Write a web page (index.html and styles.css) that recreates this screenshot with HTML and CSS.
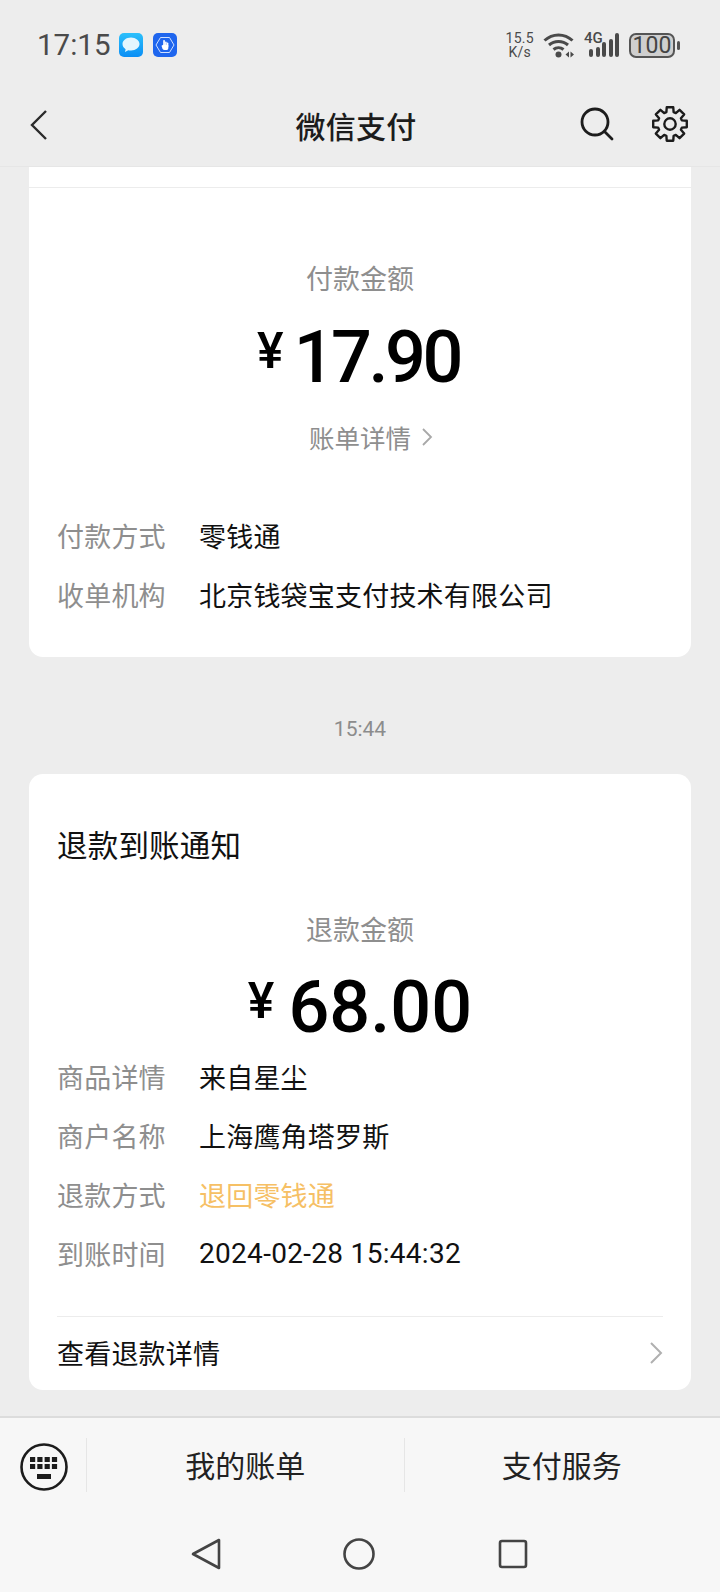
FILE: index.html
```html
<!DOCTYPE html>
<html lang="zh">
  <head>
    <meta charset="utf-8">
    <link rel="stylesheet" href="styles.css">
  </head>
  <body>
    <div class="status-bar">
      <div class="status-left">
        <span class="clock">17:15</span>
        <svg class="app-icon" viewBox="0 0 24 24">
          <defs>
            <linearGradient id="msg-bg" x1="0" y1="0" x2="0" y2="1">
              <stop offset="0" stop-color="#2cc0fb"/>
              <stop offset="1" stop-color="#0a8ef5"/>
            </linearGradient>
          </defs>
          <rect width="24" height="24" rx="5" fill="url(#msg-bg)"/>
          <path d="M12 4.500c-4.800 0-8.500 2.900-8.500 6.600 0 2.100 1.200 3.900 3.100 5.100l-.6 2.800 3.300-1.800c.9.200 1.800.300 2.700.300 4.800 0 8.500-2.900 8.500-6.400S16.800 4.500 12 4.500z" fill="#e4f6fe"/>
        </svg>
        <svg class="app-icon" viewBox="0 0 24 24">
          <rect width="24" height="24" rx="5" fill="#1f66ee"/>
          <path d="M7.500 4.500h9L21 12l-4.500 7.500h-9L3 12z" fill="none" stroke="#cfe0ff" stroke-width="1"/>
          <g fill="#fff">
            <rect x="10.200" y="7" width="1.700" height="7" rx=".8"/>
            <rect x="12.100" y="8.500" width="1.500" height="5" rx=".7"/>
            <rect x="13.800" y="9.500" width="1.500" height="5" rx=".7"/>
            <path d="M8.500 12.800l1.700-1h5.100v3.400c0 1.100-.8 1.900-1.900 1.900h-1.900c-.8 0-1.500-.4-1.900-1.100z"/>
          </g>
        </svg>
      </div>
      <div class="status-right">
        <div class="speed"><span>15.5</span><span>K/s</span></div>
        <svg class="wifi" viewBox="0 0 32 26" fill="none" stroke="#4a4a4a" stroke-width="3">
          <path d="M1.500 8.500c8-7.500 20-7.500 28 0"/>
          <path d="M6 13c5.500-4.800 13.500-4.800 19 0"/>
          <path d="M10.500 17.500c3-2.500 7-2.500 10 0"/>
          <circle cx="15.500" cy="22.500" r="3" fill="#4a4a4a" stroke="none"/>
          <path d="M26 19.500l-3.500 3 3.500 3zM27.500 19.500l3.500 3-3.500 3z" fill="#4a4a4a" stroke="none"/>
        </svg>
        <div class="signal">
          <span class="net">4G</span>
          <i class="bar-1"></i><i class="bar-2"></i><i class="bar-3"></i><i class="bar-4"></i><i class="bar-5"></i>
        </div>
        <div class="battery"><span class="battery-level">100</span><i class="battery-tip"></i></div>
      </div>
    </div>

    <div class="nav-bar">
      <svg class="back" viewBox="0 0 20 32" fill="none" stroke="#2b2b2b" stroke-width="2.400">
        <path d="M17 2L3 16l14 14"/>
      </svg>
      <div class="nav-title">微信支付</div>
      <svg class="nav-icon search" viewBox="0 0 36 36" fill="none" stroke="#1c1c1c" stroke-width="2.800" stroke-linecap="round">
        <circle cx="15" cy="15" r="13"/>
        <path d="M24.500 24.500l7.500 7.500"/>
      </svg>
      <svg class="nav-icon gear" viewBox="0 0 40 40" fill="none" stroke="#1c1c1c" stroke-width="2.500" stroke-linejoin="round">
        <path d="M16.200 7.570L16.570 2.330H23.430L23.800 7.570L26.100 8.520L30.070 5.080L34.920 9.930L31.480 13.900L32.430 16.200L37.670 16.570V23.430L32.430 23.800L31.480 26.100L34.920 30.070L30.070 34.920L26.100 31.480L23.800 32.430L23.430 37.670H16.570L16.200 32.430L13.900 31.480L9.930 34.920L5.080 30.070L8.520 26.100L7.570 23.800L2.330 23.430V16.570L7.570 16.200L8.520 13.900L5.080 9.930L9.930 5.080L13.900 8.520z"/>
        <circle cx="20" cy="20" r="6"/>
      </svg>
    </div>

    <div class="messages">
      <div class="card card-pay">
        <div class="card-rule"></div>
        <div class="amount-label">付款金额</div>
        <div class="amount amount-pay"><span class="yen">¥</span>17.90</div>
        <div class="bill-link">账单详情
          <svg class="chevron-small" viewBox="0 0 12 20" fill="none" stroke="#a8a8a8" stroke-width="1.800"><path d="M2 2l8 8-8 8"/></svg>
        </div>
        <div class="rows rows-pay">
          <div class="row"><span class="row-key">付款方式</span><span class="row-val">零钱通</span></div>
          <div class="row"><span class="row-key">收单机构</span><span class="row-val">北京钱袋宝支付技术有限公司</span></div>
        </div>
      </div>

      <div class="timestamp">15:44</div>

      <div class="card card-refund">
        <div class="card-title">退款到账通知</div>
        <div class="amount-label">退款金额</div>
        <div class="amount amount-refund"><span class="yen">¥</span>68.00</div>
        <div class="rows">
          <div class="row"><span class="row-key">商品详情</span><span class="row-val">来自星尘</span></div>
          <div class="row"><span class="row-key">商户名称</span><span class="row-val">上海鹰角塔罗斯</span></div>
          <div class="row"><span class="row-key">退款方式</span><span class="row-val orange">退回零钱通</span></div>
          <div class="row"><span class="row-key">到账时间</span><span class="row-val date">2024-02-28 15:44:32</span></div>
        </div>
        <div class="detail-link">
          <span>查看退款详情</span>
          <svg class="chevron" viewBox="0 0 14 24" fill="none" stroke="#b0b0b0" stroke-width="2"><path d="M2 2l10 10L2 22"/></svg>
        </div>
      </div>
    </div>

    <div class="footer">
      <div class="menu">
        <div class="menu-kbd">
          <svg class="kbd" viewBox="0 0 48 48">
            <circle cx="24" cy="24" r="22.500" fill="none" stroke="#1c1c1c" stroke-width="2.600"/>
            <g fill="#1c1c1c">
              <rect x="10" y="14" width="5.200" height="5"/><rect x="17.300" y="14" width="5.200" height="5"/><rect x="24.600" y="14" width="5.200" height="5"/><rect x="31.900" y="14" width="5.200" height="5"/>
              <rect x="10" y="21" width="5.200" height="5"/><rect x="17.300" y="21" width="5.200" height="5"/><rect x="24.600" y="21" width="5.200" height="5"/><rect x="31.900" y="21" width="5.200" height="5"/>
              <rect x="17" y="31" width="14" height="5"/>
            </g>
          </svg>
        </div>
        <div class="menu-item">我的账单</div>
        <div class="menu-item">支付服务</div>
      </div>
      <div class="sys-nav">
        <svg class="sys-icon" viewBox="0 0 32 32" fill="none" stroke="#444" stroke-width="2.600" stroke-linejoin="round">
          <path d="M29 2v28L3 16z"/>
        </svg>
        <svg class="sys-icon" viewBox="0 0 32 32" fill="none" stroke="#444" stroke-width="2.600">
          <circle cx="16" cy="16" r="14.500"/>
        </svg>
        <svg class="sys-icon" viewBox="0 0 32 32" fill="none" stroke="#444" stroke-width="2.600" stroke-linejoin="round">
          <rect x="3" y="3" width="26" height="26" rx="2"/>
        </svg>
      </div>
    </div>
  </body>
</html>
```

FILE: styles.css
```css
html,
body {
  margin: 0;
  padding: 0;
}
body {
  width: 720px;
  height: 1592px;
  overflow: hidden;
  display: flex;
  flex-direction: column;
  background: #ededed;
  font-family: "Noto Sans CJK SC", "Noto Sans", sans-serif;
  color: #111;
}
.status-bar {
  height: 84px;
  flex: none;
  display: flex;
  align-items: center;
  justify-content: space-between;
  padding: 6px 45px 0 37px;
  box-sizing: border-box;
  color: #4a4a4a;
}
.status-left {
  display: flex;
  align-items: center;
}
.clock {
  font-family: Roboto, sans-serif;
  font-size: 29.500px;
  margin-right: 9px;
}
.app-icon {
  width: 24px;
  height: 24px;
  margin-right: 10px;
}
.status-right {
  display: flex;
  align-items: center;
}
.speed {
  display: flex;
  flex-direction: column;
  align-items: center;
  font-family: Roboto, sans-serif;
  font-size: 14px;
  letter-spacing: 0.300px;
  line-height: 14.500px;
  margin-right: 9px;
}
.wifi {
  width: 32px;
  height: 26px;
  margin-right: 9px;
}
.signal {
  position: relative;
  width: 35px;
  height: 26px;
  display: flex;
  align-items: flex-end;
  justify-content: flex-end;
  gap: 2.500px;
  margin-right: 10px;
  padding-bottom: 1px;
  box-sizing: border-box;
}
.net {
  position: absolute;
  left: 0;
  top: -1px;
  font-family: Roboto, sans-serif;
  font-size: 15px;
  font-weight: 500;
  line-height: 14px;
}
.signal i {
  display: block;
  width: 4px;
  background: #4a4a4a;
  border-radius: 2px;
}
.bar-1 {
  height: 8px;
}
.bar-2 {
  height: 10px;
}
.bar-3 {
  height: 15px;
}
.bar-4 {
  height: 18px;
}
.bar-5 {
  height: 24px;
}
.battery {
  position: relative;
  width: 46px;
  height: 25px;
  box-sizing: border-box;
  border: 2px solid #555;
  border-radius: 7px;
  background: #cfcfcf;
  display: flex;
  align-items: center;
  justify-content: center;
}
.battery-level {
  font-family: Roboto, sans-serif;
  font-size: 23px;
  line-height: 21px;
  color: #444;
}
.battery-tip {
  position: absolute;
  right: -7px;
  top: 6px;
  width: 3px;
  height: 9px;
  background: #555;
  border-radius: 2px;
}
.nav-bar {
  height: 83px;
  flex: none;
  display: flex;
  align-items: center;
  position: relative;
  border-bottom: 1px solid #e6e6e6;
  box-sizing: border-box;
}
.back {
  width: 20px;
  height: 32px;
  margin-left: 29px;
}
.nav-title {
  position: absolute;
  left: 0;
  right: 8px;
  text-align: center;
  font-size: 30px;
  letter-spacing: 0.200px;
  font-weight: 500;
  color: #1c1c1c;
}
.nav-icon {
  position: absolute;
}
.search {
  left: 580px;
  top: 23px;
  width: 36px;
  height: 36px;
}
.gear {
  left: 651px;
  top: 21px;
  width: 38px;
  height: 38px;
}
.messages {
  flex: 1;
  overflow: hidden;
  padding: 0 29px;
}
.card {
  background: #fff;
  box-sizing: border-box;
}
.card-pay {
  height: 490px;
  padding: 20px 28px 0;
  border-radius: 0 0 14px 14px;
}
.card-rule {
  height: 1px;
  background: #ececec;
  margin: 0 -28px;
}
.amount-label {
  text-align: center;
  font-size: 27px;
  line-height: 40px;
  color: #8e8e8e;
  margin-top: 70px;
}
.amount {
  display: flex;
  justify-content: center;
  align-items: center;
  margin-top: 18px;
  font-family: Roboto, sans-serif;
  font-size: 72px;
  font-weight: 500;
  line-height: 84px;
  color: #000;
}
.amount-pay {
  letter-spacing: -3.500px;
  padding-right: 3px;
}
.amount-pay .yen {
  margin-right: 10px;
}
.yen {
  font-size: 50px;
  letter-spacing: 0;
  margin-right: 14px;
  position: relative;
  top: -7px;
}
.bill-link {
  display: flex;
  justify-content: center;
  align-items: center;
  gap: 10px;
  padding-left: 22px;
  font-size: 25.500px;
  line-height: 40px;
  color: #8e8e8e;
  margin-top: 17px;
}
.chevron-small {
  width: 12px;
  height: 20px;
}
.rows {
  display: flex;
  flex-direction: column;
  gap: 19px;
}
.rows-pay {
  margin-top: 59px;
}
.row {
  display: flex;
  font-size: 27px;
  line-height: 40px;
}
.row-key {
  width: 142px;
  flex: none;
  letter-spacing: 0.200px;
  color: #8e8e8e;
}
.row-val {
  color: #111;
  letter-spacing: 0.200px;
}
.orange {
  color: #f6c065;
}
.date {
  font-family: Roboto, sans-serif;
  font-size: 28px;
  letter-spacing: 0.300px;
}
.timestamp {
  text-align: center;
  font-family: Roboto, sans-serif;
  font-size: 21px;
  line-height: 28px;
  color: #8c8c8c;
  margin: 58px 0 31px;
}
.card-refund {
  height: 616px;
  border-radius: 14px;
  padding: 0 28px;
}
.card-title {
  padding-top: 50px;
  font-size: 30.500px;
  letter-spacing: 0.200px;
  line-height: 40px;
  color: #111;
}
.card-refund .amount-label {
  margin-top: 45px;
}
.amount-refund {
  margin-top: 17px;
  margin-bottom: 7px;
}
.detail-link {
  display: flex;
  align-items: center;
  justify-content: space-between;
  margin-top: 42px;
  height: 75px;
  padding-bottom: 3px;
  box-sizing: border-box;
  border-top: 1px solid #ececec;
  font-size: 27px;
  letter-spacing: 0.200px;
  color: #111;
}
.chevron {
  width: 14px;
  height: 24px;
}
.footer {
  height: 176px;
  flex: none;
  background: #f7f7f7;
  border-top: 2px solid #dcdcdc;
  box-sizing: border-box;
}
.menu {
  display: flex;
  height: 94px;
  align-items: stretch;
}
.menu-kbd {
  width: 87px;
  flex: none;
  display: flex;
  align-items: center;
  justify-content: center;
  border-right: 1px solid #e6e6e6;
  box-sizing: border-box;
  margin: 20px 0;
  padding: 4px 0 0 1px;
}
.kbd {
  width: 48px;
  height: 48px;
}
.menu-item {
  flex: 1;
  display: flex;
  align-items: center;
  justify-content: center;
  padding-bottom: 2px;
  font-size: 30px;
  color: #222;
  position: relative;
}
.menu-item + .menu-item::before {
  content: "";
  position: absolute;
  left: 0;
  top: 20px;
  bottom: 20px;
  width: 1px;
  background: #e6e6e6;
}
.sys-nav {
  display: flex;
  justify-content: center;
  gap: 121.500px;
  padding: 26px 2px 0 0;
}
.sys-icon {
  width: 32px;
  height: 32px;
}
```
